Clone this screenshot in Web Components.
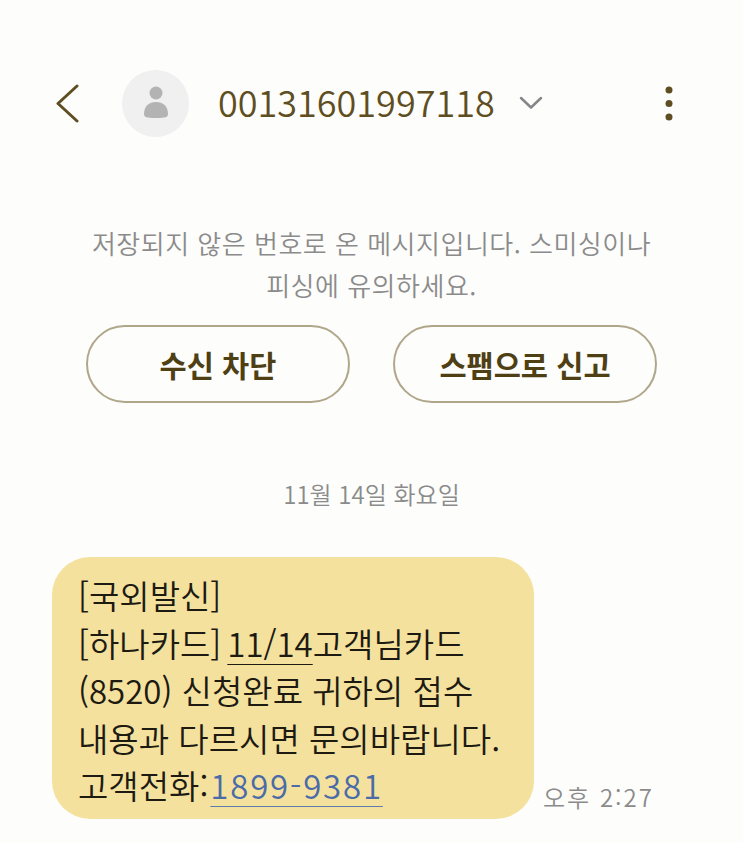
<!DOCTYPE html>
<html lang="ko">
<head>
<meta charset="utf-8">
<title>메시지</title>
<style>
  html, body { margin: 0; padding: 0; background: #fdfdfb; }
  body {
    width: 743px;
    height: 843px;
    overflow: hidden;
    font-family: "Noto Sans CJK KR", "Noto Sans", sans-serif;
  }
</style>
</head>
<body>
<sms-screen>
  <sms-header number="00131601997118"></sms-header>
  <spam-notice>
    저장되지 않은 번호로 온 메시지입니다. 스미싱이나<br>피싱에 유의하세요.
    <pill-button slot="actions">수신 차단</pill-button>
    <pill-button slot="actions">스팸으로 신고</pill-button>
  </spam-notice>
  <date-chip>11월 14일 화요일</date-chip>
  <msg-row time="오후 2:27">
    [국외발신]<br>[하나카드]<msg-link>11/14</msg-link>고객님카드<br>(8520) 신청완료 귀하의 접수<br>내용과 다르시면 문의바랍니다.<br>고객전화:<msg-link tel>1899-9381</msg-link>
  </msg-row>
</sms-screen>

<script>
class SmsScreen extends HTMLElement {
  constructor() {
    super();
    this.attachShadow({mode: "open"});
    this.shadowRoot.innerHTML = `
      <style>
        :host { display: flex; flex-direction: column; width: 743px; height: 843px; }
      </style>
      <slot></slot>
    `;
  }
}

class SmsHeader extends HTMLElement {
  constructor() {
    super();
    this.attachShadow({mode: "open"});
  }
  connectedCallback() {
    this.shadowRoot.innerHTML = `
      <style>
        :host {
          display: flex;
          align-items: center;
          height: 68px;
          padding: 69px 0 0 56px;
          color: #5f4e22;
        }
        .back { width: 24px; height: 40px; margin-top: 2px; flex: none; }
        .avatar {
          width: 67px; height: 67px; margin-left: 42px; flex: none;
          border-radius: 50%; background: #f0f0f0;
          display: flex; align-items: center; justify-content: center;
        }
        .num {
          margin: 0 0 4px 29px;
          font-size: 36px;
          line-height: 64px;
          font-weight: 350;
          white-space: nowrap;
        }
        .chev { width: 24px; height: 14px; margin-left: 24px; flex: none; }
        .more { width: 12px; height: 38px; margin: 2px 0 0 120px; flex: none; }
      </style>
      <svg class="back" viewBox="0 0 24 40" fill="none" stroke="#5f4e22" stroke-width="3" stroke-linecap="round" stroke-linejoin="round">
        <path d="M21 2 L2 19.500 L21 37"/>
      </svg>
      <div class="avatar">
        <svg width="26" height="34" viewBox="0 0 26 34" fill="#b3b3b3">
          <circle cx="13" cy="7" r="6.500"/>
          <path d="M1 28 C1 20 6 16 13 16 C20 16 25 20 25 28 C25 31 23 32 13 32 C3 32 1 31 1 28 Z"/>
        </svg>
      </div>
      <span class="num">${this.getAttribute("number")}</span>
      <svg class="chev" viewBox="0 0 24 14" fill="none" stroke="#85858a" stroke-width="2.500" stroke-linecap="round" stroke-linejoin="round">
        <path d="M2 2 L12 11.500 L22 2"/>
      </svg>
      <svg class="more" viewBox="0 0 12 38" fill="#5f4e22">
        <circle cx="6" cy="5" r="3.500"/>
        <circle cx="6" cy="18.500" r="3.500"/>
        <circle cx="6" cy="32" r="3.500"/>
      </svg>
    `;
  }
}

class SpamNotice extends HTMLElement {
  constructor() {
    super();
    this.attachShadow({mode: "open"});
    this.shadowRoot.innerHTML = `
      <style>
        :host {
          display: flex;
          flex-direction: column;
          align-items: center;
          padding-top: 85px;
        }
        .msg {
          font-size: 26px;
          letter-spacing: 0.500px;
          line-height: 42px;
          color: #8b8b8b;
          text-align: center;
          white-space: nowrap;
          font-weight: 350;
        }
        .actions {
          display: flex;
          gap: 43px;
          margin-top: 19px;
        }
      </style>
      <div class="msg"><slot></slot></div>
      <div class="actions"><slot name="actions"></slot></div>
    `;
  }
}

class PillButton extends HTMLElement {
  constructor() {
    super();
    this.attachShadow({mode: "open"});
    this.shadowRoot.innerHTML = `
      <style>
        :host {
          display: flex;
          align-items: center;
          justify-content: center;
          box-sizing: border-box;
          width: 264px;
          height: 78px;
          border: 2.500px solid #b0a78b;
          border-radius: 39px;
          font-size: 29.500px;
          font-weight: 700;
          color: #4f3f14;
        }
      </style>
      <slot></slot>
    `;
  }
}

class DateChip extends HTMLElement {
  constructor() {
    super();
    this.attachShadow({mode: "open"});
    this.shadowRoot.innerHTML = `
      <style>
        :host {
          display: block;
          margin-top: 73px;
          text-align: center;
          font-size: 24px;
          line-height: 36px;
          color: #8b8b8b;
          font-weight: 350;
        }
      </style>
      <slot></slot>
    `;
  }
}

class MsgRow extends HTMLElement {
  constructor() {
    super();
    this.attachShadow({mode: "open"});
  }
  connectedCallback() {
    this.shadowRoot.innerHTML = `
      <style>
        :host {
          display: flex;
          align-items: flex-end;
          margin: 45px 0 0 52px;
        }
        .bubble {
          box-sizing: border-box;
          width: 482px;
          height: 262px;
          padding: 15px 0 0 26px;
          border-radius: 38px;
          background: #f4e19e;
          color: #1d1a12;
          font-size: 33px;
          line-height: 47.500px;
          white-space: nowrap;
          font-weight: 350;
        }
        .time {
          margin: 0 0 4px 9px;
          font-size: 24px;
          letter-spacing: 2px;
          line-height: 36px;
          color: #8b8b8b;
          white-space: nowrap;
          font-weight: 350;
        }
      </style>
      <div class="bubble"><slot></slot></div>
      <span class="time">${this.getAttribute("time")}</span>
    `;
  }
}

class MsgLink extends HTMLElement {
  constructor() {
    super();
    this.attachShadow({mode: "open"});
    // no whitespace around the slot, it would show up as a space in the line
    this.shadowRoot.innerHTML = `<style>
        :host {
          display: inline;
          margin-left: 6px;
          text-decoration: underline;
          text-decoration-thickness: 1px;
          text-underline-offset: 7px;
        }
        :host([tel]) {
          margin-left: 2px;
          color: #4a6ba8;
          text-decoration-color: #5e7bb0;
          letter-spacing: 1.800px;
        }
      </style><slot></slot>`;
  }
}

customElements.define("sms-screen", SmsScreen);
customElements.define("sms-header", SmsHeader);
customElements.define("spam-notice", SpamNotice);
customElements.define("pill-button", PillButton);
customElements.define("date-chip", DateChip);
customElements.define("msg-row", MsgRow);
customElements.define("msg-link", MsgLink);
</script>
</body>
</html>
